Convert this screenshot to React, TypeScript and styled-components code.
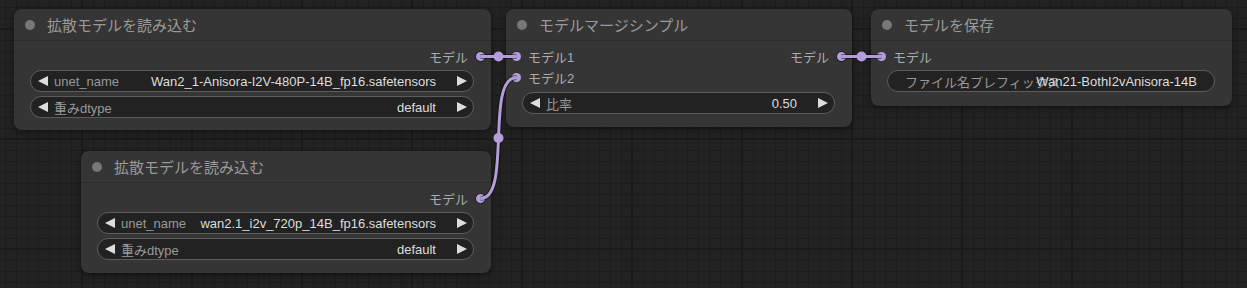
import React from "react";
import styled, { createGlobalStyle } from "styled-components";

const LINK = "#b39ddb";

const GlobalStyle = createGlobalStyle`
  html, body {
    margin: 0;
    padding: 0;
    background: #222;
  }
  body {
    font-family: "Liberation Sans", "Noto Sans CJK JP", sans-serif;
  }
`;

const Canvas = styled.div`
  position: relative;
  width: 1247px;
  height: 288px;
  overflow: hidden;
  background-color: #222;
  background-image: linear-gradient(to right, #1a1a1a 2px, transparent 2px),
    linear-gradient(to bottom, #1a1a1a 2px, transparent 2px),
    linear-gradient(to right, #1c1c1c 1px, transparent 1px),
    linear-gradient(to bottom, #1c1c1c 1px, transparent 1px);
  background-size: 110px 110px, 110px 110px, 11px 11px, 11px 11px;
  background-position: 81px 28px, 81px 28px, 5px 7px, 5px 7px;
`;

const NodeBox = styled.div<{ $x: number; $y: number; $w: number; $h: number }>`
  position: absolute;
  left: ${(p) => p.$x}px;
  top: ${(p) => p.$y}px;
  width: ${(p) => p.$w}px;
  height: ${(p) => p.$h}px;
  box-sizing: border-box;
  display: flex;
  flex-direction: column;
  background: #353535;
  border-radius: 8px;
  box-shadow: 0 2px 6px rgba(0, 0, 0, 0.45);
`;

const Title = styled.div`
  flex: none;
  height: 32px;
  box-sizing: border-box;
  display: flex;
  align-items: center;
  gap: 12px;
  padding-left: 11px;
  border-bottom: 1px solid #2b2b2b;
  color: #9a9a9a;
  font-size: 15px;
  white-space: nowrap;
`;

const TitleDot = styled.span`
  width: 10px;
  height: 10px;
  border-radius: 50%;
  background: #777;
`;

const Body = styled.div`
  display: flex;
  flex-direction: column;
  padding-top: 5px;
`;

const SlotRow = styled.div`
  height: 21px;
  display: flex;
  align-items: center;
  padding: 0 5px 0 6px;
  font-size: 13px;
  color: #ababab;
`;

const Slot = styled.div<{ $out?: boolean }>`
  display: flex;
  align-items: center;
  gap: 7px;
  margin-left: ${(p) => (p.$out ? "auto" : "0")};
`;

const InDot = styled.span`
  width: 9px;
  height: 9px;
  border-radius: 50%;
  background: ${LINK};
`;

const OutDot = styled.span`
  width: 9px;
  height: 9px;
  border-radius: 50%;
  background: ${LINK};
  border: 1px solid #141414;
`;

const WidgetList = styled.div<{ $top: number }>`
  display: flex;
  flex-direction: column;
  gap: 4px;
  margin: ${(p) => p.$top}px 17px 0 16px;
`;

const Widget = styled.div`
  height: 22px;
  box-sizing: border-box;
  display: flex;
  align-items: center;
  padding: 0 6px 0 7px;
  background: #222;
  border: 1px solid #5c5c5c;
  border-radius: 11px;
  font-size: 13px;
  white-space: nowrap;
  overflow: hidden;
`;

const TextWidget = styled(Widget)`
  display: grid;
  align-items: center;
  padding: 0 17px;
`;

const Label = styled.span`
  color: #999;
  margin-left: 6px;
`;

const Value = styled.span`
  color: #ddd;
  margin-left: auto;
  margin-right: 21px;
`;

const Layered = styled.span<{ $end?: boolean }>`
  grid-area: 1 / 1;
  justify-self: ${(p) => (p.$end ? "end" : "start")};
  color: ${(p) => (p.$end ? "#ddd" : "#999")};
`;

const Links = styled.svg`
  position: absolute;
  left: 0;
  top: 0;
  pointer-events: none;
`;

const Arrow = ({ dir }: { dir: "l" | "r" }) => (
  <svg width="10" height="10" viewBox="0 0 10 10">
    <polygon points={dir === "l" ? "10,0 10,10 0,5" : "0,0 0,10 10,5"} fill="#ddd" />
  </svg>
);

const Combo = ({ label, value }: { label: string; value: string }) => (
  <Widget>
    <Arrow dir="l" />
    <Label>{label}</Label>
    <Value>{value}</Value>
    <Arrow dir="r" />
  </Widget>
);

type Geo = { x: number; y: number; w: number; h: number };

const N1: Geo = { x: 14, y: 9, w: 477, h: 121 };
const N2: Geo = { x: 81, y: 151, w: 410, h: 122 };
const N3: Geo = { x: 506, y: 9, w: 346, h: 118 };
const N4: Geo = { x: 871, y: 9, w: 361, h: 97 };

const slotY = (n: Geo, i: number) => n.y + 32 + 5 + 10.5 + i * 21;
const outX = (n: Geo) => n.x + n.w - 10.5;
const inX = (n: Geo) => n.x + 10.5;

const links = [
  { a: [outX(N1), slotY(N1, 0)], b: [inX(N3), slotY(N3, 0)] },
  { a: [outX(N2), slotY(N2, 0)], b: [inX(N3), slotY(N3, 1)] },
  { a: [outX(N3), slotY(N3, 0)], b: [inX(N4), slotY(N4, 0)] },
];

const Node = ({
  geo,
  title,
  children,
}: {
  geo: Geo;
  title: string;
  children: React.ReactNode;
}) => (
  <NodeBox $x={geo.x} $y={geo.y} $w={geo.w} $h={geo.h}>
    <Title>
      <TitleDot />
      {title}
    </Title>
    <Body>{children}</Body>
  </NodeBox>
);

const App = (): JSX.Element => {
  return (
    <Canvas>
      <GlobalStyle />
      <Node geo={N1} title="拡散モデルを読み込む">
        <SlotRow>
          <Slot $out>
            モデル
            <OutDot />
          </Slot>
        </SlotRow>
        <WidgetList $top={3}>
          <Combo label="unet_name" value="Wan2_1-Anisora-I2V-480P-14B_fp16.safetensors" />
          <Combo label="重みdtype" value="default" />
        </WidgetList>
      </Node>

      <Node geo={N2} title="拡散モデルを読み込む">
        <SlotRow>
          <Slot $out>
            モデル
            <OutDot />
          </Slot>
        </SlotRow>
        <WidgetList $top={3}>
          <Combo label="unet_name" value="wan2.1_i2v_720p_14B_fp16.safetensors" />
          <Combo label="重みdtype" value="default" />
        </WidgetList>
      </Node>

      <Node geo={N3} title="モデルマージシンプル">
        <SlotRow>
          <Slot>
            <InDot />
            モデル1
          </Slot>
          <Slot $out>
            モデル
            <OutDot />
          </Slot>
        </SlotRow>
        <SlotRow>
          <Slot>
            <InDot />
            モデル2
          </Slot>
        </SlotRow>
        <WidgetList $top={4}>
          <Combo label="比率" value="0.50" />
        </WidgetList>
      </Node>

      <Node geo={N4} title="モデルを保存">
        <SlotRow>
          <Slot>
            <InDot />
            モデル
          </Slot>
        </SlotRow>
        <WidgetList $top={3}>
          <TextWidget>
            <Layered>ファイル名プレフィックス</Layered>
            <Layered $end>Wan21-BothI2vAnisora-14B</Layered>
          </TextWidget>
        </WidgetList>
      </Node>

      <Links width={1247} height={288}>
        {links.map(({ a, b }, i) => {
          const d = Math.hypot(b[0] - a[0], b[1] - a[1]) * 0.25;
          const path = `M${a[0]},${a[1]} C${a[0] + d},${a[1]} ${b[0] - d},${b[1]} ${b[0]},${b[1]}`;
          return (
            <g key={i}>
              <path d={path} stroke="rgba(0,0,0,0.45)" strokeWidth={5} fill="none" />
              <path d={path} stroke={LINK} strokeWidth={3} fill="none" />
              <circle cx={(a[0] + b[0]) / 2} cy={(a[1] + b[1]) / 2} r={5} fill={LINK} />
            </g>
          );
        })}
      </Links>
    </Canvas>
  );
};

export default App;
